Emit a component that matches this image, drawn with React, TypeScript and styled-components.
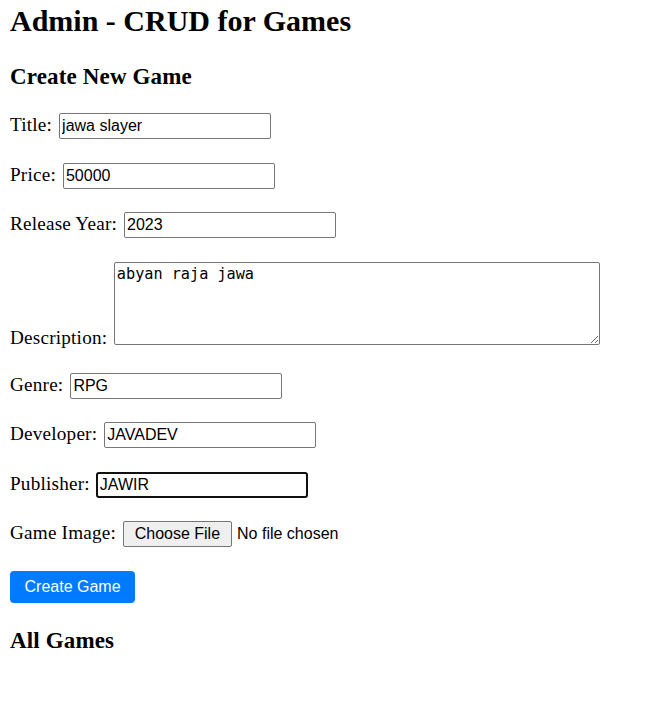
import React from "react";
import styled, { createGlobalStyle, css } from "styled-components";

const GlobalStyle = createGlobalStyle`
  html, body { margin: 0; padding: 0; background: #ffffff; }
  body { font-family: "Liberation Serif", "Times New Roman", serif; color: #000; }
`;

const Page = styled.div`
  padding: 0 10px;
  font-family: "Liberation Serif", "Times New Roman", serif;
  color: #000;
`;

const PageTitle = styled.h1`
  margin: 4px 0 0;
  font-size: 30px;
  line-height: 34px;
  font-weight: bold;
`;

const SectionTitle = styled.h2<{ $top: number }>`
  margin: ${(p) => p.$top}px 0 0;
  font-size: 23px;
  line-height: 27px;
  font-weight: bold;
  letter-spacing: 0.15px;
`;

const Form = styled.form`
  margin-top: 23px;
  display: flex;
  flex-direction: column;
  align-items: flex-start;
  gap: 23.5px;
`;

const Row = styled.div<{ $bottom?: boolean }>`
  display: flex;
  align-items: baseline;
  gap: 6.6px;
  ${(p) =>
    p.$bottom &&
    css`
      align-items: flex-end;
      padding-bottom: 4.6px;
    `}
`;

const Label = styled.label<{ $bottom?: boolean }>`
  font-size: 19.2px;
  line-height: normal;
  letter-spacing: 0.2px;
  white-space: nowrap;
  ${(p) =>
    p.$bottom &&
    css`
      margin-bottom: -4.6px;
      margin-right: 0px;
    `}
`;

const TextInput = styled.input<{ $focused?: boolean }>`
  box-sizing: border-box;
  width: 212px;
  height: 26px;
  margin: 0;
  padding: 0 2.4px;
  font-family: "Liberation Sans", Arial, sans-serif;
  font-size: 16px;
  color: #000;
  background: #fff;
  border: 1px solid #767676;
  border-radius: 2px;
  outline: none;
  ${(p) =>
    p.$focused &&
    css`
      border: 2px solid #101010;
      border-radius: 3px;
      padding: 0 1.4px;
    `}
`;

const TextArea = styled.textarea`
  box-sizing: border-box;
  width: 486px;
  height: 83px;
  margin: 0;
  padding: 2px;
  font-family: "DejaVu Sans Mono", "Liberation Mono", monospace;
  font-size: 15.2px;
  color: #000;
  border: 1px solid #767676;
  border-radius: 2px;
  outline: none;
`;

const FileButton = styled.button`
  box-sizing: border-box;
  height: 26px;
  padding: 0 11px;
  margin: 0 5px 0 0;
  font-family: "Liberation Sans", Arial, sans-serif;
  font-size: 16px;
  color: #000;
  background: #efefef;
  border: 1px solid #767676;
  border-radius: 2px;
`;

const FileStatus = styled.span`
  font-family: "Liberation Sans", Arial, sans-serif;
  font-size: 16px;
`;

const FileGroup = styled.span`
  display: inline-flex;
  align-items: baseline;
`;

const SubmitButton = styled.button`
  box-sizing: border-box;
  height: 32px;
  padding: 0 14.5px;
  font-family: "Liberation Sans", Arial, sans-serif;
  font-size: 16px;
  color: #fff;
  background: #007bff;
  border: none;
  border-radius: 4px;
`;

type Field = { label: string; value: string; focused?: boolean };

const before: Field[] = [
  { label: "Title:", value: "jawa slayer" },
  { label: "Price:", value: "50000" },
  { label: "Release Year:", value: "2023" },
];

const after: Field[] = [
  { label: "Genre:", value: "RPG" },
  { label: "Developer:", value: "JAVADEV" },
  { label: "Publisher:", value: "JAWIR", focused: true },
];

function FieldRow({ f }: { f: Field }) {
  return (
    <Row>
      <Label>{f.label}</Label>
      <TextInput type="text" defaultValue={f.value} $focused={f.focused} />
    </Row>
  );
}

export default function App() {
  return (
    <>
      <GlobalStyle />
      <Page>
        <PageTitle>Admin - CRUD for Games</PageTitle>
        <SectionTitle $top={25}>Create New Game</SectionTitle>
        <Form onSubmit={(e) => e.preventDefault()}>
          {before.map((f) => (
            <FieldRow key={f.label} f={f} />
          ))}
          <Row $bottom>
            <Label $bottom>Description:</Label>
            <TextArea defaultValue="abyan raja jawa" />
          </Row>
          {after.map((f) => (
            <FieldRow key={f.label} f={f} />
          ))}
          <Row>
            <Label>Game Image:</Label>
            <FileGroup>
              <FileButton type="button">Choose File</FileButton>
              <FileStatus>No file chosen</FileStatus>
            </FileGroup>
          </Row>
          <SubmitButton type="submit">Create Game</SubmitButton>
        </Form>
        <SectionTitle $top={24.8}>All Games</SectionTitle>
      </Page>
    </>
  );
}
